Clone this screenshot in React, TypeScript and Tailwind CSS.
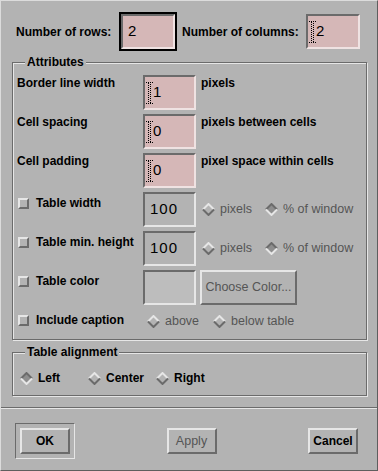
const Diamond = ({ on = false }: { on?: boolean }) => (
  <svg width="13" height="13" viewBox="0 0 13 13" className="shrink-0">
    <polygon points="6.5,1 12,6.5 6.5,12 1,6.5" fill={on ? "#8e8e8e" : "#b3b3b3"} />
    <polyline points="1,6.5 6.5,1 12,6.5" fill="none" stroke={on ? "#6b6b6b" : "#e6e6e6"} strokeWidth="2" />
    <polyline points="1,6.5 6.5,12 12,6.5" fill="none" stroke={on ? "#e6e6e6" : "#6b6b6b"} strokeWidth="2" />
  </svg>
);

const IBeam = () => (
  <svg width="7" height="22" viewBox="0 0 7 22" className="shrink-0">
    <path
      d="M0 0.5h7M0 21.5h7M2.5 1v20M4.5 2v19"
      stroke="#000"
      strokeWidth="1"
      strokeDasharray="1 1"
      fill="none"
    />
  </svg>
);

const CheckBox = () => (
  <span className="ml-[1px] block h-[11px] w-[11px] shrink-0 border-2 border-t-[#e6e6e6] border-l-[#e6e6e6] border-r-[#6b6b6b] border-b-[#6b6b6b] bg-[#b3b3b3]" />
);

const Field = ({
  value,
  cursor = false,
  pink = true,
  width = "w-[53px]",
}: {
  value: string;
  cursor?: boolean;
  pink?: boolean;
  width?: string;
}) => (
  <div
    className={`flex h-[35px] ${width} items-center border-2 border-t-[#6b6b6b] border-l-[#6b6b6b] ${
      pink
        ? "border-r-[#efe2e2] border-b-[#efe2e2] bg-[#d5b7b7]"
        : "border-r-[#e6e6e6] border-b-[#e6e6e6] bg-[#b3b3b3]"
    } ${cursor ? "pl-[1px]" : "pl-[5px]"} text-[15px] font-normal tracking-[1px] text-black`}
  >
    {cursor && <IBeam />}
    <span>{value}</span>
  </div>
);

const Radio = ({ label, on = false, width }: { label: string; on?: boolean; width: string }) => (
  <div className={`flex ${width} items-center gap-[5px] text-[12.5px] font-normal text-[#555]`}>
    <Diamond on={on} />
    <span>{label}</span>
  </div>
);

const Button = ({ label, disabled = false }: { label: string; disabled?: boolean }) => (
  <button
    type="button"
    className={`flex h-[26px] w-[50px] items-center justify-center border-2 border-t-[#e6e6e6] border-l-[#e6e6e6] border-r-[#6b6b6b] border-b-[#6b6b6b] bg-[#b3b3b3] ${
      disabled ? "text-[12.5px] font-normal text-[#555]" : "text-[12px] font-bold text-black"
    }`}
  >
    {label}
  </button>
);

const Frame = ({ title, children, className }: { title: string; children: React.ReactNode; className: string }) => (
  <div
    className={`relative ml-[11px] w-[355px] border border-[#6b6b6b] shadow-[inset_1px_1px_0_#e6e6e6,1px_1px_0_#e6e6e6] ${className}`}
  >
    <span className="absolute left-[12px] top-[-9px] bg-[#b3b3b3] px-[2px] text-[12px] font-bold leading-[16px] text-black">
      {title}
    </span>
    {children}
  </div>
);

const Label = ({ text, check = false, top }: { text: string; check?: boolean; top?: string }) => (
  <div
    className={`flex items-start gap-[7px] ${top ?? (check ? "pt-[4px]" : "pt-[1px]")} text-[12px] font-bold text-black`}
  >
    {check && <span className="pt-[2px]"><CheckBox /></span>}
    <span className="leading-[15px]">{text}</span>
  </div>
);

const App = () => {
  return (
    <div className="h-[471px] w-[378px] overflow-hidden border border-t-[#dcdcdc] border-l-[#dcdcdc] border-r-[#5e5e5e] border-b-[#5e5e5e] bg-[#b3b3b3] font-['Liberation_Sans',sans-serif] text-black">
      <div className="flex items-center pl-[15px] pt-[11px]">
        <span className="w-[103px] text-[12px] font-bold">Number of rows:</span>
        <div className="border-2 border-black">
          <Field value="2" width="w-[54px]" />
        </div>
        <span className="ml-[5px] w-[124px] text-[12px] font-bold">Number of columns:</span>
        <Field value="2" cursor width="w-[54px]" />
      </div>

      <Frame title="Attributes" className="mt-[11px] pb-[8px] pl-[4px] pt-[12px]">
        <div className="grid grid-cols-[126px_53px_1fr] gap-y-[4px]">
          <Label text="Border line width" />
          <Field value="1" cursor />
          <div className="pl-[5px] pt-[1px] text-[12px] font-bold leading-[15px]">pixels</div>

          <Label text="Cell spacing" />
          <Field value="0" cursor />
          <div className="pl-[5px] pt-[1px] text-[12px] font-bold leading-[15px]">pixels between cells</div>

          <Label text="Cell padding" />
          <Field value="0" cursor />
          <div className="pl-[5px] pt-[1px] text-[12px] font-bold leading-[15px]">pixel space within cells</div>

          <Label text="Table width" check />
          <Field value="100" pink={false} />
          <div className="flex items-center pl-[6px]">
            <Radio label="pixels" width="w-[63px]" />
            <Radio label="% of window" on width="w-auto" />
          </div>

          <Label text="Table min. height" check />
          <Field value="100" pink={false} />
          <div className="flex items-center pl-[6px]">
            <Radio label="pixels" width="w-[63px]" />
            <Radio label="% of window" on width="w-auto" />
          </div>

          <Label text="Table color" check />
          <div className="h-[35px] w-[53px] border-2 border-t-[#6b6b6b] border-l-[#6b6b6b] border-r-[#e6e6e6] border-b-[#e6e6e6] bg-[#bdbdbd]" />
          <div className="pl-[4px]">
            <button
              type="button"
              className="flex h-[35px] w-[97px] items-center justify-center border-2 border-t-[#e6e6e6] border-l-[#e6e6e6] border-r-[#6b6b6b] border-b-[#6b6b6b] text-[12.5px] font-normal text-[#555]"
            >
              Choose Color...
            </button>
          </div>

          <div className="flex h-[22px] items-center">
            <Label text="Include caption" check top="pt-0" />
          </div>
          <div className="col-span-2 flex h-[22px] items-center pl-[4px] pt-[3px]">
            <Radio label="above" width="w-[66px]" />
            <Radio label="below table" width="w-auto" />
          </div>
        </div>
      </Frame>

      <Frame title="Table alignment" className="mt-[12px] flex h-[44px] items-center pl-[7px] pt-[8px]">
        {[
          ["Left", true],
          ["Center", false],
          ["Right", false],
        ].map(([label, on]) => (
          <div key={label as string} className="flex w-[68px] items-center gap-[5px] text-[12px] font-bold">
            <Diamond on={on as boolean} />
            <span>{label as string}</span>
          </div>
        ))}
      </Frame>

      <div className="mt-[11px] h-[2px] border-t border-b border-t-[#6b6b6b] border-b-[#e6e6e6]" />

      <div className="mt-[14px] flex items-center justify-between pl-[14px] pr-[19px]">
        <div className="border border-t-[#6b6b6b] border-l-[#6b6b6b] border-r-[#e6e6e6] border-b-[#e6e6e6] p-[4px]">
          <Button label="OK" />
        </div>
        <Button label="Apply" disabled />
        <Button label="Cancel" />
      </div>
    </div>
  );
};

export default App;
